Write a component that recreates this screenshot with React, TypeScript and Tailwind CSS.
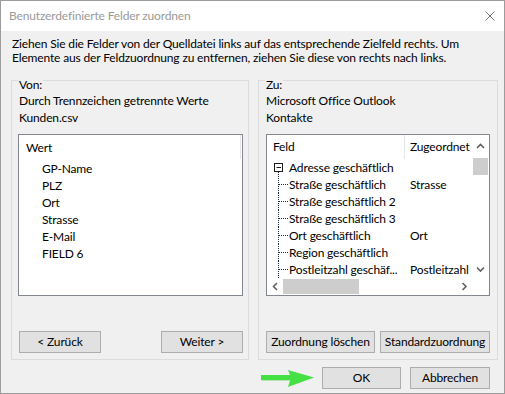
const sourceFields = ["GP-Name", "PLZ", "Ort", "Strasse", "E-Mail", "FIELD 6"]

const targetRows = [
  { label: "Straße geschäftlich", mapped: "Strasse" },
  { label: "Straße geschäftlich 2", mapped: "" },
  { label: "Straße geschäftlich 3", mapped: "" },
  { label: "Ort geschäftlich", mapped: "Ort" },
  { label: "Region geschäftlich", mapped: "" },
  { label: "Postleitzahl geschäf...", mapped: "Postleitzahl" },
]

function Button({ label, width }: { label: string; width: string }) {
  return (
    <button
      className={`${width} h-[22px] shrink-0 border border-[#adadad] bg-[#e1e1e1] text-[12px] leading-none text-black`}
    >
      {label}
    </button>
  )
}

function Chevron({ dir }: { dir: "up" | "down" | "left" | "right" }) {
  const d = {
    up: "M1 5 L4.5 1.5 L8 5",
    down: "M1 1.5 L4.5 5 L8 1.5",
    left: "M5 1 L1.5 4.5 L5 8",
    right: "M1.5 1 L5 4.5 L1.5 8",
  }[dir]
  const vertical = dir === "up" || dir === "down"
  return (
    <svg width={vertical ? 9 : 7} height={vertical ? 7 : 9} viewBox={vertical ? "0 0 9 7" : "0 0 7 9"}>
      <path d={d} fill="none" stroke="#606060" strokeWidth="1.6" />
    </svg>
  )
}

function TreeLines({ parent }: { parent?: boolean }) {
  return (
    <svg width="22" height="17" viewBox="0 0 22 17" className="shrink-0">
      {parent ? (
        <>
          <rect x="7.5" y="4.5" width="8" height="8" fill="white" stroke="#1a1a1a" />
          <line x1="9.5" y1="8.5" x2="14" y2="8.5" stroke="#1a1a1a" />
          <line x1="11.5" y1="13" x2="11.5" y2="17" stroke="#1a2a50" strokeDasharray="1 1" />
        </>
      ) : (
        <>
          <line x1="11.5" y1="0" x2="11.5" y2="17" stroke="#1a2a50" strokeDasharray="1 1" />
          <line x1="12" y1="8.5" x2="21" y2="8.5" stroke="#1a2a50" strokeDasharray="1 1" />
        </>
      )}
    </svg>
  )
}

export default function App() {
  return (
    <div className="flex h-[394px] w-[505px] flex-col border border-[#9c9c9c] bg-[#f0f0f0] font-['Lato',sans-serif] text-[12px] tracking-[-0.15px] text-black">
      {/* Title bar */}
      <div className="flex h-[30px] shrink-0 items-center justify-between bg-white pl-[8px] pr-[9px]">
        <span className="text-[#9a9a9a]">Benutzerdefinierte Felder zuordnen</span>
        <svg width="10" height="10" viewBox="0 0 10 10">
          <path d="M0.5 0.5 L9.5 9.5 M9.5 0.5 L0.5 9.5" stroke="#777" strokeWidth="1" />
        </svg>
      </div>

      <p className="whitespace-nowrap pl-[11px] pt-[6px] leading-[14px]">
        Ziehen Sie die Felder von der Quelldatei links auf das entsprechende Zielfeld rechts. Um
        <br />
        Elemente aus der Feldzuordnung zu entfernen, ziehen Sie diese von rechts nach links.
      </p>

      <div className="mt-[15px] flex gap-[9px] pl-[10px]">
        {/* Von */}
        <div className="relative flex h-[280px] w-[238px] flex-col border border-[#dcdcdc]">
          <span className="absolute left-[6px] top-[-4px] bg-[#f0f0f0] px-[1px] leading-[16px]">Von:</span>
          <div className="whitespace-nowrap pl-[7px] pt-[11px] leading-[17px]">
            <div>Durch Trennzeichen getrennte Werte</div>
            <div>Kunden.csv</div>
          </div>
          <div className="ml-[6px] mt-[8px] h-[162px] w-[225px] border border-[#828790] bg-white">
            <div className="h-[24px] w-[222px] border-r border-[#e5e5e5] pl-[7px] pt-[4px] leading-[17px]">Wert</div>
            <div className="pl-[23px] pt-[1px] leading-[17px]">
              {sourceFields.map((f) => (
                <div key={f}>{f}</div>
              ))}
            </div>
          </div>
          <div className="mt-auto flex justify-between pb-[6px] pl-[7px] pr-[5px]">
            <Button label="< Zurück" width="w-[82px]" />
            <Button label="Weiter >" width="w-[82px]" />
          </div>
        </div>

        {/* Zu */}
        <div className="relative flex h-[280px] w-[240px] flex-col border border-[#dcdcdc]">
          <span className="absolute left-[6px] top-[-4px] bg-[#f0f0f0] px-[1px] leading-[16px]">Zu:</span>
          <div className="whitespace-nowrap pl-[7px] pt-[11px] leading-[17px]">
            <div>Microsoft Office Outlook</div>
            <div>Kontakte</div>
          </div>
          <div className="ml-[7px] mt-[8px] flex h-[162px] w-[224px] flex-col border border-[#828790] bg-white">
            <div className="flex h-[143px]">
              <div className="w-[205px] overflow-hidden">
                <div className="flex h-[24px] items-center whitespace-nowrap">
                  <div className="h-full w-[138px] shrink-0 border-r border-[#e5e5e5] pl-[6px] leading-[24px]">Feld</div>
                  <div className="pl-[5px]">Zugeordnet</div>
                </div>
                <div className="flex h-[17px] items-center whitespace-nowrap leading-[17px]">
                  <TreeLines parent />
                  <span>Adresse geschäftlich</span>
                </div>
                {targetRows.map((r) => (
                  <div key={r.label} className="flex h-[17px] items-center whitespace-nowrap leading-[17px]">
                    <div className="flex w-[143px] shrink-0 items-center overflow-hidden">
                      <TreeLines />
                      <span>{r.label}</span>
                    </div>
                    <span>{r.mapped}</span>
                  </div>
                ))}
              </div>
              {/* vertical scrollbar */}
              <div className="flex w-[17px] flex-col bg-white">
                <div className="flex h-[23px] items-center justify-center">
                  <Chevron dir="up" />
                </div>
                <div className="mx-auto h-[17px] w-[15px] bg-[#cdcdcd]" />
                <div className="mt-auto flex h-[18px] items-center justify-center">
                  <Chevron dir="down" />
                </div>
              </div>
            </div>
            {/* horizontal scrollbar */}
            <div className="flex h-[17px]">
              <div className="flex w-[205px] items-center">
                <div className="flex w-[16px] justify-center">
                  <Chevron dir="left" />
                </div>
                <div className="h-[15px] w-[76px] bg-[#cdcdcd]" />
                <div className="ml-auto flex w-[16px] justify-center">
                  <Chevron dir="right" />
                </div>
              </div>
              <div className="w-[17px]" />
            </div>
          </div>
          <div className="mt-auto flex gap-[5px] pb-[6px] pl-[7px]">
            <Button label="Zuordnung löschen" width="w-[109px]" />
            <Button label="Standardzuordnung" width="w-[110px]" />
          </div>
        </div>
      </div>

      {/* Footer */}
      <div className="mt-[7px] flex items-center justify-end pr-[14px]">
        <svg width="54" height="22" viewBox="0 0 54 22" className="mr-[7px]">
          <rect x="0" y="8" width="31" height="5" fill="#2fbf2f" opacity="0.35" transform="translate(0.5 0.8)" />
          <rect x="0" y="8" width="31" height="5" fill="#44e044" />
          <polygon points="27,3 53,10.5 27,20 30,10.5" fill="#44e044" />
        </svg>
        <Button label="OK" width="w-[79px]" />
        <div className="w-[9px]" />
        <Button label="Abbrechen" width="w-[80px]" />
      </div>
    </div>
  )
}
